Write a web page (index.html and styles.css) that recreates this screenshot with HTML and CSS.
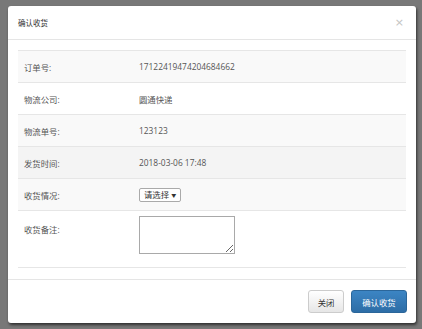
FILE: index.html
```html
<!DOCTYPE html>
<html lang="zh">
<head>
  <meta charset="UTF-8" />
  <title>确认收货</title>
  <link rel="stylesheet" href="styles.css">
</head>
<body>

  <div class="modal">
    <div class="modal-header">
      <span class="modal-title">确认收货</span>
      <span class="close">&times;</span>
    </div>

    <div class="modal-body">
      <table class="info">
        <tbody>
          <tr class="striped">
            <td class="label">订单号:</td>
            <td>17122419474204684662</td>
          </tr>
          <tr>
            <td class="label">物流公司:</td>
            <td>圆通快递</td>
          </tr>
          <tr class="striped">
            <td class="label">物流单号:</td>
            <td>123123</td>
          </tr>
          <tr class="hover">
            <td class="label">发货时间:</td>
            <td>2018-03-06 17:48</td>
          </tr>
          <tr class="striped">
            <td class="label">收货情况:</td>
            <td>
              <span class="select">请选择 <span class="arrow">&#9660;</span></span>
            </td>
          </tr>
          <tr class="note">
            <td class="label">收货备注:</td>
            <td><textarea class="remark"></textarea></td>
          </tr>
        </tbody>
      </table>
    </div>

    <div class="modal-footer">
      <button class="btn btn-default">关闭</button>
      <button class="btn btn-primary">确认收货</button>
    </div>
  </div>

</body>
</html>
```

FILE: styles.css
```css
* {
  box-sizing: border-box;
}
body {
  margin: 0;
  height: 329px;
  overflow: hidden;
  background: #787878;
  font-family: "Open Sans", "Noto Sans CJK SC", sans-serif;
  font-size: 8.4px;
  color: #555;
}
.modal {
  width: 408px;
  height: 317px;
  margin: 6px 0 0 8px;
  background: #fff;
  border-radius: 3px;
  box-shadow: 1px 2px 3px rgba(0, 0, 0, 0.6);
}
.modal-header {
  height: 34px;
  padding: 0 12px 0 10px;
  border-bottom: 1px solid #e5e5e5;
  display: flex;
  align-items: center;
  justify-content: space-between;
}
.modal-title {
  font-size: 7.5px;
  color: #333;
}
.close {
  font-family: "DejaVu Sans", sans-serif;
  font-size: 11px;
  color: #c4c4c4;
}
.modal-body {
  padding: 10px 10px 11px;
}
.info {
  width: 100%;
  border-collapse: collapse;
}
.info td {
  height: 32px;
  padding: 0;
  border-top: 1px solid #e6e6e6;
  vertical-align: middle;
}
.info td.label {
  width: 121px;
  padding-left: 6px;
}
.info tr.striped {
  background: #f9f9f9;
}
.info tr.hover {
  background: #f4f4f4;
}
.info tr.note td {
  height: 57px;
  vertical-align: top;
  padding-top: 5px;
  border-bottom: 1px solid #e6e6e6;
}
.info tr.note td.label {
  padding-top: 12px;
}
.select {
  display: inline-block;
  height: 14px;
  line-height: 12px;
  padding: 0 4px;
  border: 1px solid #aaa;
  border-radius: 2px;
  background: #fff;
  color: #333;
}
.arrow {
  font-size: 5px;
  vertical-align: 1px;
}
.remark {
  display: block;
  width: 96px;
  height: 38px;
  margin: 0;
  border: 1px solid #a9a9a9;
  resize: vertical;
}
.modal-footer {
  border-top: 1px solid #e5e5e5;
  padding: 10px 9px;
  display: flex;
  justify-content: flex-end;
  gap: 7px;
}
.btn {
  height: 23px;
  padding: 0 8px;
  font-family: inherit;
  font-size: 8.4px;
  border-radius: 3px;
}
.btn-default {
  width: 36px;
  background: linear-gradient(to bottom, #fff 0%, #e6e6e6 100%);
  border: 1px solid #ccc;
  color: #333;
}
.btn-primary {
  width: 56px;
  background: linear-gradient(to bottom, #3c85c4 0%, #2d6da6 100%);
  border: 1px solid #2b669a;
  color: #fff;
}
```
